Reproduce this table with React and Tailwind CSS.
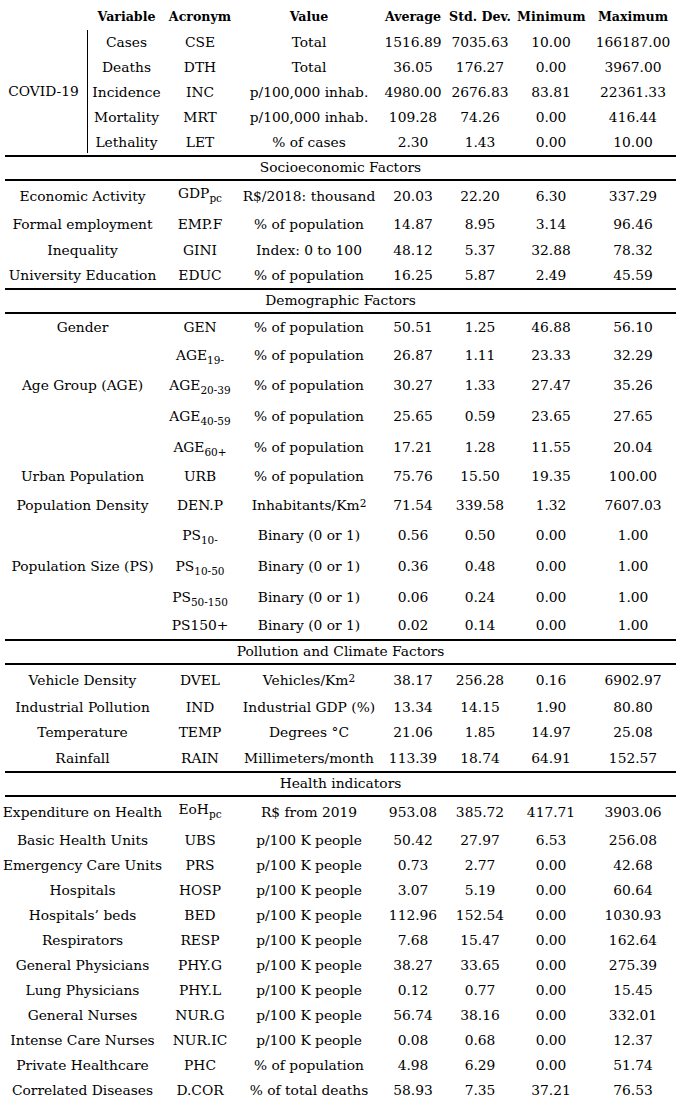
import React from "react";

// column templates: covid block has its own group column on the left
const covidCols = "grid grid-cols-[77px_70px_148px_60px_74px_68px_96px] items-center text-center";
const rowCols = "grid grid-cols-[165px_70px_148px_60px_74px_68px_96px] items-center text-center";

const Sub = ({ children }) => (
    <sub className="text-[10.5px] relative top-[4px]">{children}</sub>
);

const Sup = ({ children }) => (
    <sup className="text-[10.5px] relative -top-[3px]">{children}</sup>
);

const covidRows = [
    ["Cases", "CSE", "Total", "1516.89", "7035.63", "10.00", "166187.00"],
    ["Deaths", "DTH", "Total", "36.05", "176.27", "0.00", "3967.00"],
    ["Incidence", "INC", "p/100,000 inhab.", "4980.00", "2676.83", "83.81", "22361.33"],
    ["Mortality", "MRT", "p/100,000 inhab.", "109.28", "74.26", "0.00", "416.44"],
    ["Lethality", "LET", "% of cases", "2.30", "1.43", "0.00", "10.00"],
];

const sections = [
    {
        title: "Socioeconomic Factors",
        rows: [
            ["Economic Activity", <span className="relative -top-[3px]">GDP<Sub>pc</Sub></span>, "R$/2018: thousand", "20.03", "22.20", "6.30", "337.29", "h-[31px]"],
            ["Formal employment", "EMP.F", "% of population", "14.87", "8.95", "3.14", "96.46", "h-[26px]"],
            ["Inequality", "GINI", "Index: 0 to 100", "48.12", "5.37", "32.88", "78.32", "h-[25px]"],
            ["University Education", "EDUC", "% of population", "16.25", "5.87", "2.49", "45.59", "h-[25px]"],
        ],
    },
    {
        title: "Demographic Factors",
        rows: [
            ["Gender", "GEN", "% of population", "50.51", "1.25", "46.88", "56.10", "h-[27px]"],
            ["", <span>AGE<Sub>19-</Sub></span>, "% of population", "26.87", "1.11", "23.33", "32.29", "h-[29px]"],
            ["Age Group (AGE)", <span>AGE<Sub>20-39</Sub></span>, "% of population", "30.27", "1.33", "27.47", "35.26", "h-[31px]"],
            ["", <span>AGE<Sub>40-59</Sub></span>, "% of population", "25.65", "0.59", "23.65", "27.65", "h-[31px]"],
            ["", <span>AGE<Sub>60+</Sub></span>, "% of population", "17.21", "1.28", "11.55", "20.04", "h-[31px]"],
            ["Urban Population", "URB", "% of population", "75.76", "15.50", "19.35", "100.00", "h-[28px]"],
            ["Population Density", "DEN.P", <span>Inhabitants/Km<Sup>2</Sup></span>, "71.54", "339.58", "1.32", "7607.03", "h-[29px]"],
            ["", <span>PS<Sub>10-</Sub></span>, "Binary (0 or 1)", "0.56", "0.50", "0.00", "1.00", "h-[31px]"],
            ["Population Size (PS)", <span>PS<Sub>10-50</Sub></span>, "Binary (0 or 1)", "0.36", "0.48", "0.00", "1.00", "h-[31px]"],
            ["", <span>PS<Sub>50-150</Sub></span>, "Binary (0 or 1)", "0.06", "0.24", "0.00", "1.00", "h-[31px]"],
            ["", "PS150+", "Binary (0 or 1)", "0.02", "0.14", "0.00", "1.00", "h-[26px]"],
        ],
    },
    {
        title: "Pollution and Climate Factors",
        rows: [
            ["Vehicle Density", "DVEL", <span>Vehicles/Km<Sup>2</Sup></span>, "38.17", "256.28", "0.16", "6902.97", "h-[31px]"],
            ["Industrial Pollution", "IND", "Industrial GDP (%)", "13.34", "14.15", "1.90", "80.80", "h-[24px]"],
            ["Temperature", "TEMP", "Degrees °C", "21.06", "1.85", "14.97", "25.08", "h-[26px]"],
            ["Rainfall", "RAIN", "Millimeters/month", "113.39", "18.74", "64.91", "152.57", "h-[25px]"],
        ],
    },
    {
        title: "Health indicators",
        rows: [
            ["Expenditure on Health", <span className="relative -top-[3px]">EoH<Sub>pc</Sub></span>, "R$ from 2019", "953.08", "385.72", "417.71", "3903.06", "h-[32px]"],
            ["Basic Health Units", "UBS", "p/100 K people", "50.42", "27.97", "6.53", "256.08", "h-[24px]"],
            ["Emergency Care Units", "PRS", "p/100 K people", "0.73", "2.77", "0.00", "42.68", "h-[25px]"],
            ["Hospitals", "HOSP", "p/100 K people", "3.07", "5.19", "0.00", "60.64", "h-[25px]"],
            ["Hospitals’ beds", "BED", "p/100 K people", "112.96", "152.54", "0.00", "1030.93", "h-[25px]"],
            ["Respirators", "RESP", "p/100 K people", "7.68", "15.47", "0.00", "162.64", "h-[25px]"],
            ["General Physicians", "PHY.G", "p/100 K people", "38.27", "33.65", "0.00", "275.39", "h-[25px]"],
            ["Lung Physicians", "PHY.L", "p/100 K people", "0.12", "0.77", "0.00", "15.45", "h-[25px]"],
            ["General Nurses", "NUR.G", "p/100 K people", "56.74", "38.16", "0.00", "332.01", "h-[25px]"],
            ["Intense Care Nurses", "NUR.IC", "p/100 K people", "0.08", "0.68", "0.00", "12.37", "h-[25px]"],
            ["Private Healthcare", "PHC", "% of population", "4.98", "6.29", "0.00", "51.74", "h-[25px]"],
            ["Correlated Diseases", "D.COR", "% of total deaths", "58.93", "7.35", "37.21", "76.53", "h-[25px]"],
        ],
    },
];

const Rule = () => <div className="mx-[5px] h-[2px] bg-black" />;

export default function App() {
    return (
        <div className="w-[681px] bg-white text-black font-['DejaVu_Serif',serif] text-[13.8px] leading-none pt-[5px] pb-[4px]">
            {/* Header */}
            <div className="flex h-[25px] items-center font-bold text-[12.6px]">
                <div className="w-[88px]" />
                <div className={covidCols + " flex-1"}>
                    <span>Variable</span>
                    <span>Acronym</span>
                    <span>Value</span>
                    <span>Average</span>
                    <span>Std. Dev.</span>
                    <span>Minimum</span>
                    <span>Maximum</span>
                </div>
            </div>

            {/* COVID-19 block */}
            <div className="flex">
                <div className="w-[88px] h-[123px] border-r border-black flex items-center justify-center">
                    COVID-19
                </div>
                <div className="flex-1">
                    {covidRows.map((r) => (
                        <div key={r[0]} className={covidCols + " h-[25px]"}>
                            {r.map((c, i) => (
                                <span key={i}>{c}</span>
                            ))}
                        </div>
                    ))}
                </div>
            </div>

            {sections.map((s) => (
                <div key={s.title}>
                    <Rule />
                    <div className="h-[22px] flex items-center justify-center">{s.title}</div>
                    <Rule />
                    {s.rows.map((r, idx) => (
                        <div key={idx} className={rowCols + " " + r[7]}>
                            {r.slice(0, 7).map((c, i) => (
                                <span key={i} className="whitespace-nowrap">{c}</span>
                            ))}
                        </div>
                    ))}
                </div>
            ))}
        </div>
    );
}
